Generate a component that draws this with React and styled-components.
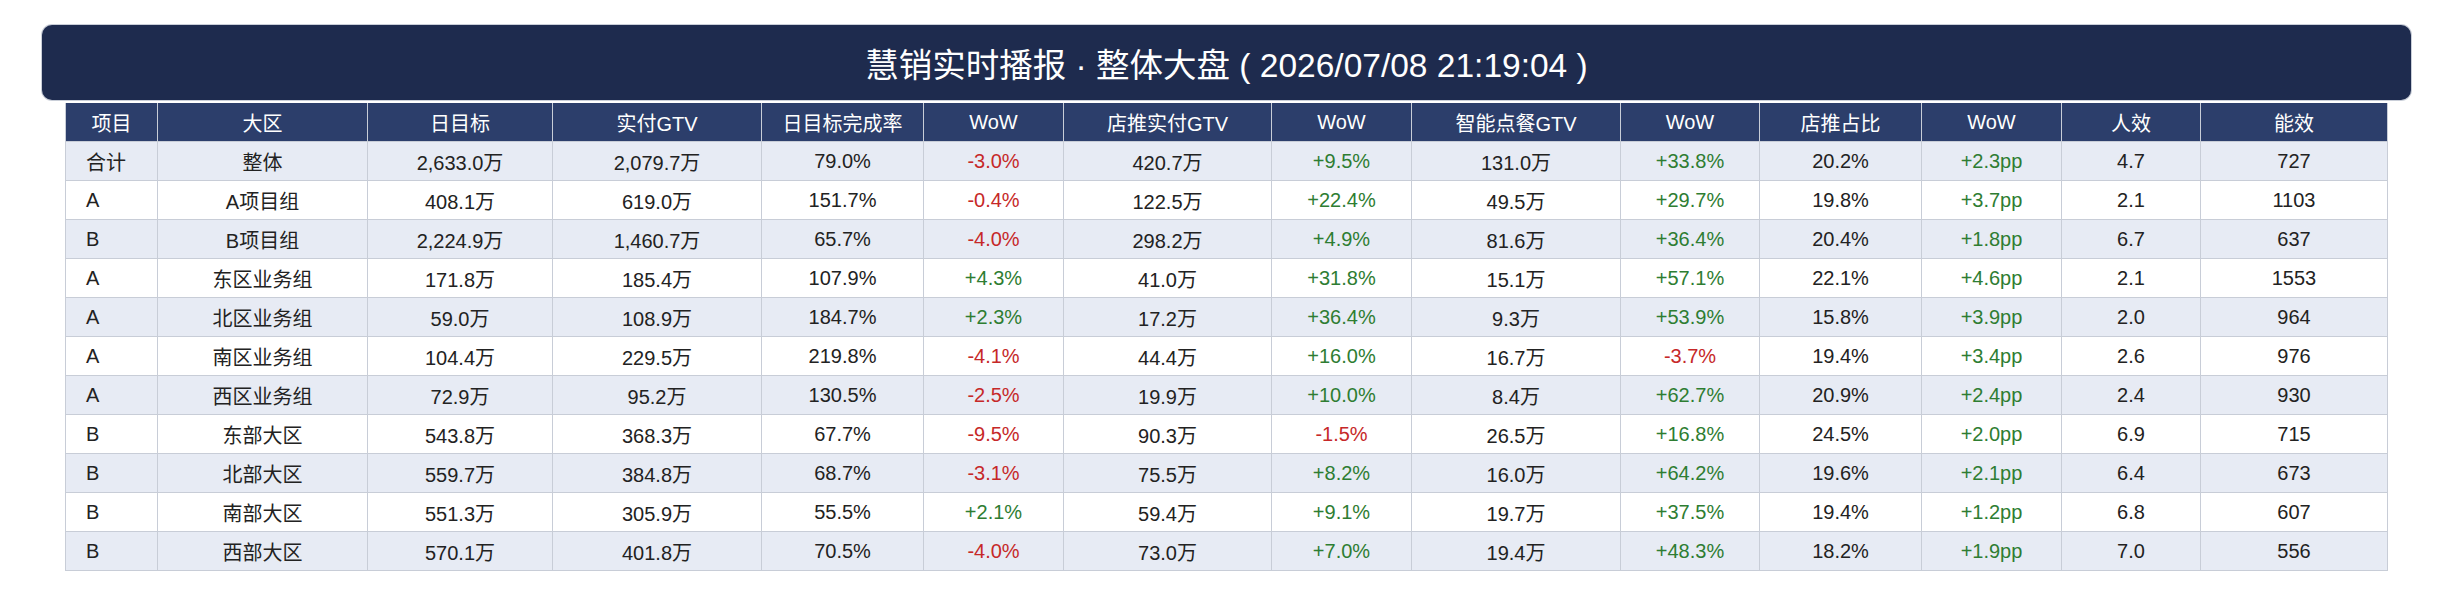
import React from "react";
import styled, { createGlobalStyle } from "styled-components";

const GlobalStyle = createGlobalStyle`
  body {
    margin: 0;
    background: #ffffff;
    font-family: "Liberation Sans", Arial, "Noto Sans CJK SC", sans-serif;
  }
`;

const columns = [
  { key: "item", label: "项目", width: 92 },
  { key: "region", label: "大区", width: 210 },
  { key: "target", label: "日目标", width: 185 },
  { key: "gtv", label: "实付GTV", width: 209 },
  { key: "rate", label: "日目标完成率", width: 162 },
  { key: "rateWow", label: "WoW", width: 140, trend: true },
  { key: "storeGtv", label: "店推实付GTV", width: 208 },
  { key: "storeWow", label: "WoW", width: 140, trend: true },
  { key: "smartGtv", label: "智能点餐GTV", width: 209 },
  { key: "smartWow", label: "WoW", width: 139, trend: true },
  { key: "share", label: "店推占比", width: 162 },
  { key: "shareWow", label: "WoW", width: 140, trend: true },
  { key: "perPerson", label: "人效", width: 139 },
  { key: "efficiency", label: "能效", width: 187 },
];

const rows = [
  ["合计", "整体", "2,633.0万", "2,079.7万", "79.0%", "-3.0%", "420.7万", "+9.5%", "131.0万", "+33.8%", "20.2%", "+2.3pp", "4.7", "727"],
  ["A", "A项目组", "408.1万", "619.0万", "151.7%", "-0.4%", "122.5万", "+22.4%", "49.5万", "+29.7%", "19.8%", "+3.7pp", "2.1", "1103"],
  ["B", "B项目组", "2,224.9万", "1,460.7万", "65.7%", "-4.0%", "298.2万", "+4.9%", "81.6万", "+36.4%", "20.4%", "+1.8pp", "6.7", "637"],
  ["A", "东区业务组", "171.8万", "185.4万", "107.9%", "+4.3%", "41.0万", "+31.8%", "15.1万", "+57.1%", "22.1%", "+4.6pp", "2.1", "1553"],
  ["A", "北区业务组", "59.0万", "108.9万", "184.7%", "+2.3%", "17.2万", "+36.4%", "9.3万", "+53.9%", "15.8%", "+3.9pp", "2.0", "964"],
  ["A", "南区业务组", "104.4万", "229.5万", "219.8%", "-4.1%", "44.4万", "+16.0%", "16.7万", "-3.7%", "19.4%", "+3.4pp", "2.6", "976"],
  ["A", "西区业务组", "72.9万", "95.2万", "130.5%", "-2.5%", "19.9万", "+10.0%", "8.4万", "+62.7%", "20.9%", "+2.4pp", "2.4", "930"],
  ["B", "东部大区", "543.8万", "368.3万", "67.7%", "-9.5%", "90.3万", "-1.5%", "26.5万", "+16.8%", "24.5%", "+2.0pp", "6.9", "715"],
  ["B", "北部大区", "559.7万", "384.8万", "68.7%", "-3.1%", "75.5万", "+8.2%", "16.0万", "+64.2%", "19.6%", "+2.1pp", "6.4", "673"],
  ["B", "南部大区", "551.3万", "305.9万", "55.5%", "+2.1%", "59.4万", "+9.1%", "19.7万", "+37.5%", "19.4%", "+1.2pp", "6.8", "607"],
  ["B", "西部大区", "570.1万", "401.8万", "70.5%", "-4.0%", "73.0万", "+7.0%", "19.4万", "+48.3%", "18.2%", "+1.9pp", "7.0", "556"],
];

const Page = styled.div`
  padding-top: 25px;
`;

const TitleBar = styled.div`
  margin: 0 42px;
  height: 75px;
  display: flex;
  align-items: center;
  justify-content: center;
  background: #1e2b4e;
  border-radius: 10px;
  box-shadow: 0 0 0 1px #c9ced8;
  color: #ffffff;
  font-size: 33.5px;
  white-space: pre;
`;

const Table = styled.table`
  width: 2322px;
  margin: 3px auto 0;
  table-layout: fixed;
  border-collapse: collapse;
  font-size: 20px;
`;

const HeadCell = styled.th`
  height: 38px;
  padding: 0 6px;
  background: #2c3e6b;
  color: #ffffff;
  font-weight: normal;
  text-align: center;
  border: 1px solid #c8cdd7;
  border-top: none;
`;

const Row = styled.tr`
  background: ${(p) => (p.$striped ? "#e7ebf4" : "#ffffff")};
`;

const Cell = styled.td`
  height: 38px;
  padding: 0 ${(p) => (p.$left ? "20px" : "6px")};
  text-align: ${(p) => (p.$left ? "left" : "center")};
  color: ${(p) =>
    p.$tone === "up" ? "#2e7d32" : p.$tone === "down" ? "#c62828" : "#222222"};
  border: 1px solid #c8cdd7;
  white-space: nowrap;
`;

const toneOf = (value) => (value.startsWith("-") ? "down" : "up");

const App = () => {
  return (
    <Page>
      <GlobalStyle />
      <TitleBar>慧销实时播报 · 整体大盘 ( 2026/07/08 21:19:04 )</TitleBar>
      <Table>
        <colgroup>
          {columns.map((c, i) => (
            <col key={i} style={{ width: c.width }} />
          ))}
        </colgroup>
        <thead>
          <tr>
            {columns.map((c, i) => (
              <HeadCell key={i}>{c.label}</HeadCell>
            ))}
          </tr>
        </thead>
        <tbody>
          {rows.map((r, ri) => (
            <Row key={ri} $striped={ri % 2 === 0}>
              {r.map((v, ci) => (
                <Cell
                  key={ci}
                  $left={ci === 0}
                  $tone={columns[ci].trend ? toneOf(v) : null}
                >
                  {v}
                </Cell>
              ))}
            </Row>
          ))}
        </tbody>
      </Table>
    </Page>
  );
};

export default App;
